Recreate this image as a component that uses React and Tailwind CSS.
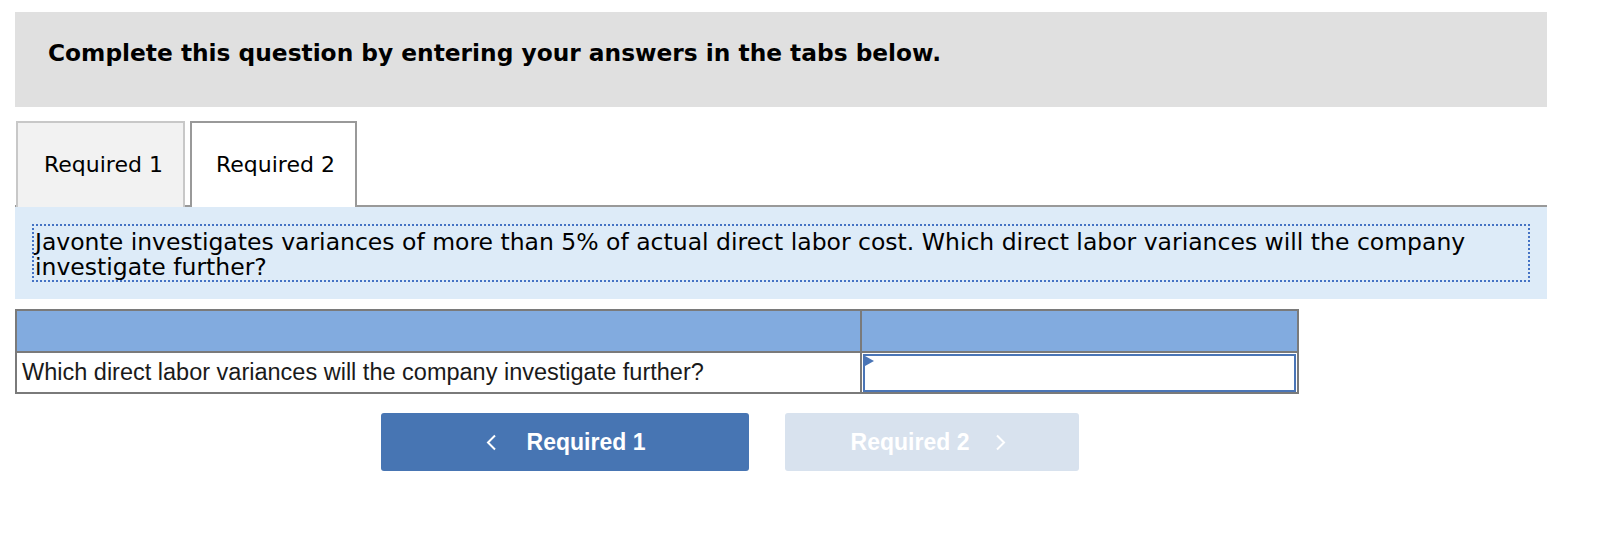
import React from 'react';

function ChevronLeft() {
  return (
    <svg width="12" height="17" viewBox="0 0 12 17" fill="none">
      <polyline points="10,1.5 3,8.5 10,15.5" stroke="white" strokeWidth="2" />
    </svg>
  );
}

function ChevronRight() {
  return (
    <svg width="12" height="17" viewBox="0 0 12 17" fill="none">
      <polyline points="2,1.5 9,8.5 2,15.5" stroke="white" strokeWidth="2" />
    </svg>
  );
}

export default function App() {
  return (
    <div className="min-h-[552px] bg-white pt-[12px] pl-[15px] font-['DejaVu_Sans',Verdana,sans-serif] text-black">
      <div className="w-[1532px]">
        {/* Header */}
        <div className="h-[95px] bg-[#e0e0e0] pl-[33px] pt-[28px]">
          <h1 className="text-[23.3px] leading-[26px] font-bold">
            Complete this question by entering your answers in the tabs below.
          </h1>
        </div>

        {/* Tabs */}
        <div className="mt-[14px] flex gap-[5px] border-b-2 border-[#999999] pl-[1px]">
          <div className="w-[169px] h-[86px] -mb-[2px] border-2 border-b-0 border-[#c8c8c8] bg-[#f2f2f2] pl-[26px] flex items-center text-[22px] leading-[26px]">
            Required 1
          </div>
          <div className="w-[167px] h-[86px] -mb-[2px] border-2 border-b-0 border-[#999999] bg-white pl-[24px] flex items-center text-[22px] leading-[26px]">
            Required 2
          </div>
        </div>

        {/* Question */}
        <div className="h-[92px] bg-[#ddebf8] pt-[17px] px-[17px]">
          <div className="border-2 border-dotted border-[#4472c4] pl-[1px] pr-[2px] pt-[4px] text-[23.5px] leading-[25px]">
            Javonte investigates variances of more than 5% of actual direct labor cost. Which direct labor variances will the company investigate further?
          </div>
        </div>

        {/* Table */}
        <div className="mt-[10px] w-[1284px] border-2 border-[#7a7a7a] font-['Liberation_Sans',Arial,sans-serif]">
          <div className="grid grid-cols-[845px_1fr] h-[40px] bg-[#82abdf]">
            <div className="border-r-2 border-[#7a7a7a]" />
            <div />
          </div>
          <div className="grid grid-cols-[845px_1fr] h-[41px] border-t-2 border-[#7a7a7a]">
            <div className="border-r-2 border-[#7a7a7a] flex items-center pl-[5px] text-[23.5px] text-[#1a1a1a]">
              Which direct labor variances will the company investigate further?
            </div>
            <div className="relative p-[1px] pb-0">
              <div className="h-full border-2 border-[#4a75b6] bg-white" />
              <div className="absolute left-[3px] top-[3px] w-0 h-0 border-y-[5px] border-y-transparent border-l-[9px] border-l-[#4a75b6]" />
            </div>
          </div>
        </div>

        {/* Nav buttons */}
        <div className="mt-[19px] flex gap-[36px] pl-[366px] font-['Liberation_Sans',Arial,sans-serif]">
          <button className="w-[368px] h-[58px] rounded-[3px] bg-[#4775b3] text-white flex items-center justify-center gap-[30px]">
            <ChevronLeft />
            <span className="text-[23px] font-bold">Required 1</span>
          </button>
          <button className="w-[294px] h-[58px] rounded-[3px] bg-[#d8e2ee] text-white flex items-center justify-center gap-[26px] pr-[6px]">
            <span className="text-[23px] font-bold">Required 2</span>
            <ChevronRight />
          </button>
        </div>
      </div>
    </div>
  );
}
